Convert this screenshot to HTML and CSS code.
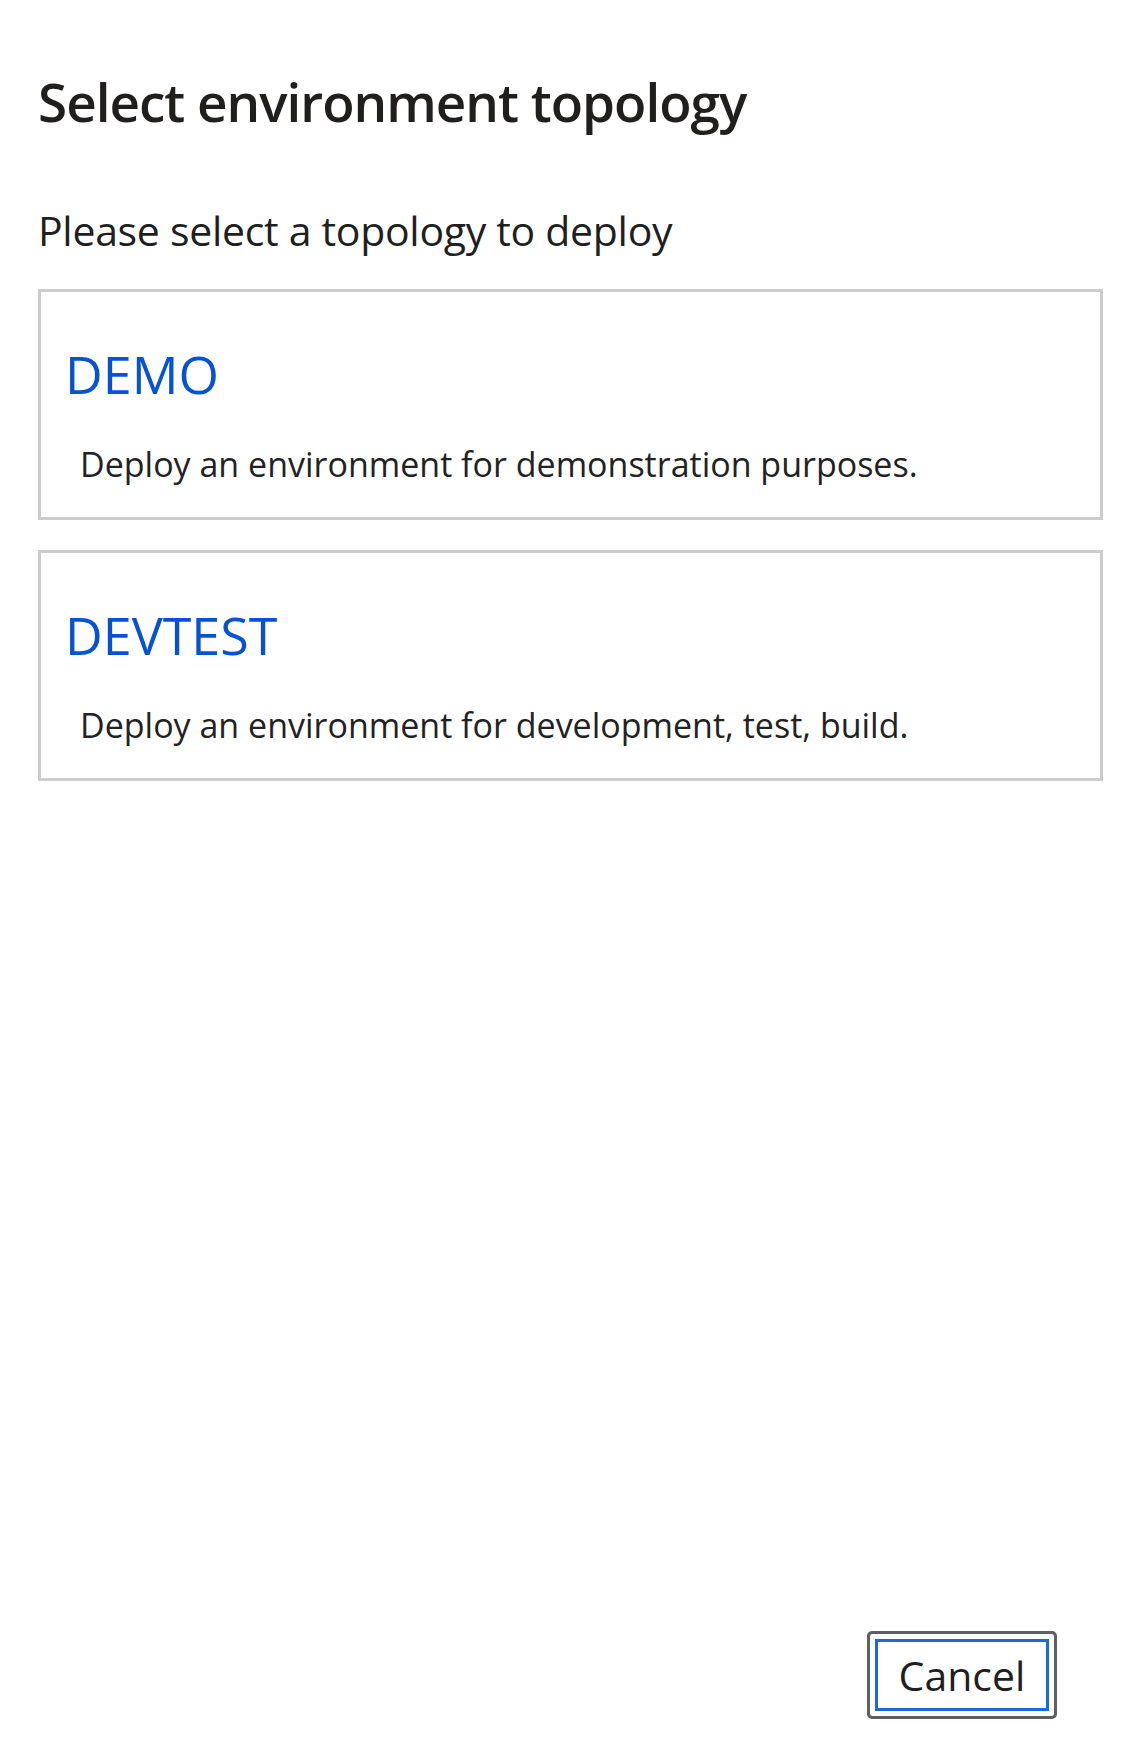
FILE: index.html
```html
<!DOCTYPE html>
<html lang="en">
<head>
<meta charset="utf-8">
<title>Select environment topology</title>
<link rel="stylesheet" href="styles.css">
</head>
<body>
<div class="dialog">
  <h1 class="title">Select environment topology</h1>
  <p class="subtitle">Please select a topology to deploy</p>
  <div class="options">
    <div class="option">
      <div class="option-name">DEMO</div>
      <div class="option-desc">Deploy an environment for demonstration purposes.</div>
    </div>
    <div class="option">
      <div class="option-name">DEVTEST</div>
      <div class="option-desc">Deploy an environment for development, test, build.</div>
    </div>
  </div>
  <div class="footer">
    <button class="cancel" type="button">Cancel</button>
  </div>
</div>
</body>
</html>
```
FILE: styles.css
```css
html, body {
  margin: 0;
  padding: 0;
  background: #ffffff;
}
body {
  font-family: "Open Sans", "Noto Sans", sans-serif;
  color: #201f1e;
}
.dialog {
  min-height: 100vh;
  box-sizing: border-box;
  display: flex;
  flex-direction: column;
  padding: 0 39px 27px 38px;
}
.title {
  margin: 64px 0 0 0;
  font-size: 53px;
  line-height: 76px;
  letter-spacing: -1px;
  font-weight: 600;
  color: #201f1e;
}
.subtitle {
  margin: 61px 0 0 0;
  font-size: 41px;
  line-height: 58px;
  letter-spacing: -0.3px;
  font-weight: 400;
}
.options {
  margin-top: 30px;
  display: flex;
  flex-direction: column;
  gap: 30px;
}
.option {
  border: 3px solid #cccccc;
  padding: 46px 20px 29px 24px;
  box-sizing: border-box;
  height: 231px;
}
.option-name {
  font-size: 52px;
  line-height: 72px;
  color: #0552d4;
  font-weight: 400;
}
.option-desc {
  margin: 32px 0 0 15px;
  font-size: 34px;
  line-height: 44px;
  color: #222222;
}
.footer {
  margin-top: auto;
  display: flex;
  justify-content: flex-end;
  padding-right: 46px;
}
.cancel {
  width: 190px;
  height: 88px;
  box-sizing: border-box;
  border: 3px solid #5f5f5f;
  border-radius: 5px;
  background: #ffffff;
  box-shadow: inset 0 0 0 5px #ffffff, inset 0 0 0 8px #1f66e5;
  font-family: "Open Sans", "Noto Sans", sans-serif;
  font-size: 41px;
  font-weight: 500;
  color: #201f1e;
  padding: 0;
}
```
